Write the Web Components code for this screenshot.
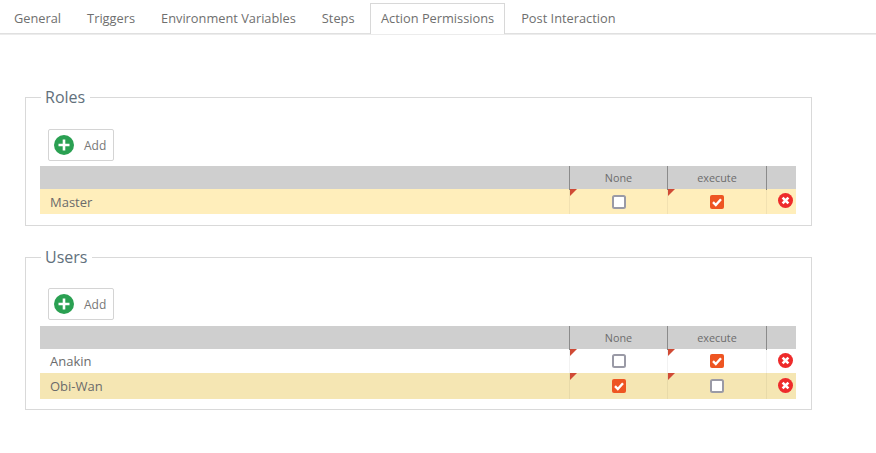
<!DOCTYPE html>
<html><head><meta charset="utf-8">
<style>
html,body{margin:0;padding:0;background:#fff;font-family:"Open Sans",sans-serif;color:#666}
x-page{display:block}
</style></head>
<body>
<x-page>
  <x-tabs>
    <x-tab>General</x-tab><x-tab>Triggers</x-tab><x-tab>Environment Variables</x-tab><x-tab>Steps</x-tab><x-tab active>Action Permissions</x-tab><x-tab>Post Interaction</x-tab>
  </x-tabs>
  <x-content>
    <x-group label="Roles" style="--top:22px;--gap:5px;--bottom:11px">
      <x-add></x-add>
      <x-grid>
        <x-row name="Master" h="25" bg="#ffeebb" none="0" exec="1"></x-row>
      </x-grid>
    </x-group>
    <x-group label="Users" style="--top:21px;--gap:6px;--bottom:10px">
      <x-add></x-add>
      <x-grid>
        <x-row name="Anakin" h="24" bg="#ffffff" none="0" exec="1"></x-row>
        <x-row name="Obi-Wan" h="26" bg="#f5e6b3" none="1" exec="0"></x-row>
      </x-grid>
    </x-group>
  </x-content>
</x-page>
<script>
function def(name, html){
  customElements.define(name, class extends HTMLElement{
    connectedCallback(){
      if(this.shadowRoot) return;
      const r=this.attachShadow({mode:'open'});
      r.innerHTML = typeof html==='function' ? html(this) : html;
    }
  });
}
def('x-tabs',`<style>:host{display:flex;height:30px;padding-top:3px;border-bottom:1px solid #e0e0e0;box-shadow:0 1px 0 #ececec}</style><slot></slot>`);
def('x-tab',el=>{
  const a=el.hasAttribute('active');
  return `<style>:host{display:block;box-sizing:border-box;height:${a?'31px':'30px'};padding:0 13px;line-height:30px;color:#6f6f6f;font-size:12.8px;white-space:nowrap;${a?'background:#fff;border:1px solid #d8d8d8;border-bottom:0;margin:0 3px -1px 2.5px;padding:0 10px;line-height:29px;':''}}
  :host(:first-child){margin-left:1px}</style><slot></slot>`;
});
def('x-content',`<style>:host{display:flex;flex-direction:column;gap:21px;width:787px;margin:53px 0 0 25px}</style><slot></slot>`);
def('x-group',el=>`<style>:host{display:block}
fieldset{margin:0;padding:var(--top) 15px var(--bottom) 14px;border:1px solid #d9d9d9;box-sizing:border-box;display:flex;flex-direction:column;min-width:0}
legend{margin-left:1px;padding:0 5px 0 4px;font-size:16px;line-height:20px;color:#62707c}
::slotted(x-add){margin-bottom:var(--gap)}
</style><fieldset><legend>${el.getAttribute('label')}</legend><slot></slot></fieldset>`);
def('x-add',`<style>:host{display:flex;align-items:center;box-sizing:border-box;width:66px;height:32px;margin-left:8px;border:1px solid #d4d4d4;border-radius:2px;padding-left:5px;font-size:12px;color:#777;background:#fff}
svg{display:block;margin-right:10px}</style>
<svg width="20" height="20" viewBox="0 0 20 20"><circle cx="10" cy="10" r="10" fill="#2aa052"/><path d="M10 4.5v11M4.5 10h11" stroke="#fff" stroke-width="2.6"/></svg><span>Add</span>`);
def('x-grid',`<style>:host{display:block}
.h{display:grid;grid-template-columns:529px 98px 99px 30px;height:23px;background:#cfcfcf;font-size:10.8px;line-height:24px;color:#6c6c6c;text-align:center}
.h div+div{border-left:1px solid #8b8b8b;box-sizing:border-box}
</style><div class="h"><div></div><div>None</div><div>execute</div><div></div></div><slot></slot>`);
const chk=on=>on?`<svg width="14" height="14" viewBox="0 0 14 14"><rect width="14" height="14" rx="2" fill="#ee5522"/><path d="M3 7.2l2.8 2.8 5.2-5.8" fill="none" stroke="#fff" stroke-width="2.4"/></svg>`:`<svg width="14" height="14" viewBox="0 0 14 14"><rect x="1" y="1" width="12" height="12" rx="1.5" fill="#fff" stroke="#9a9aa6" stroke-width="2"/></svg>`;
def('x-row',el=>`<style>:host{display:grid;grid-template-columns:529px 98px 99px 30px;height:${el.getAttribute('h')}px;box-sizing:border-box;background:${el.getAttribute('bg')};font-size:13px;color:#6b6b6b}
.c{position:relative;display:flex;align-items:center;justify-content:center;border-left:1px solid rgba(0,0,0,.05);box-sizing:border-box}
.n{padding-left:10px;justify-content:flex-start;border:0}
.c.f::before{content:"";position:absolute;left:0;top:0;border-top:7px solid #d04a35;border-right:7px solid transparent}
svg{display:block}
.x{padding-left:7px;padding-bottom:2px}
</style>
<div class="c n">${el.getAttribute('name')}</div>
<div class="c f">${chk(el.getAttribute('none')==='1')}</div>
<div class="c f">${chk(el.getAttribute('exec')==='1')}</div>
<div class="c x"><svg width="15" height="15" viewBox="0 0 15 15"><circle cx="7.5" cy="7.5" r="7.5" fill="#ee2b2b"/><path d="M4.6 4.6l5.8 5.8M10.4 4.6l-5.8 5.8" stroke="#fff" stroke-width="2.6"/></svg></div>`);
</script>
</body></html>
